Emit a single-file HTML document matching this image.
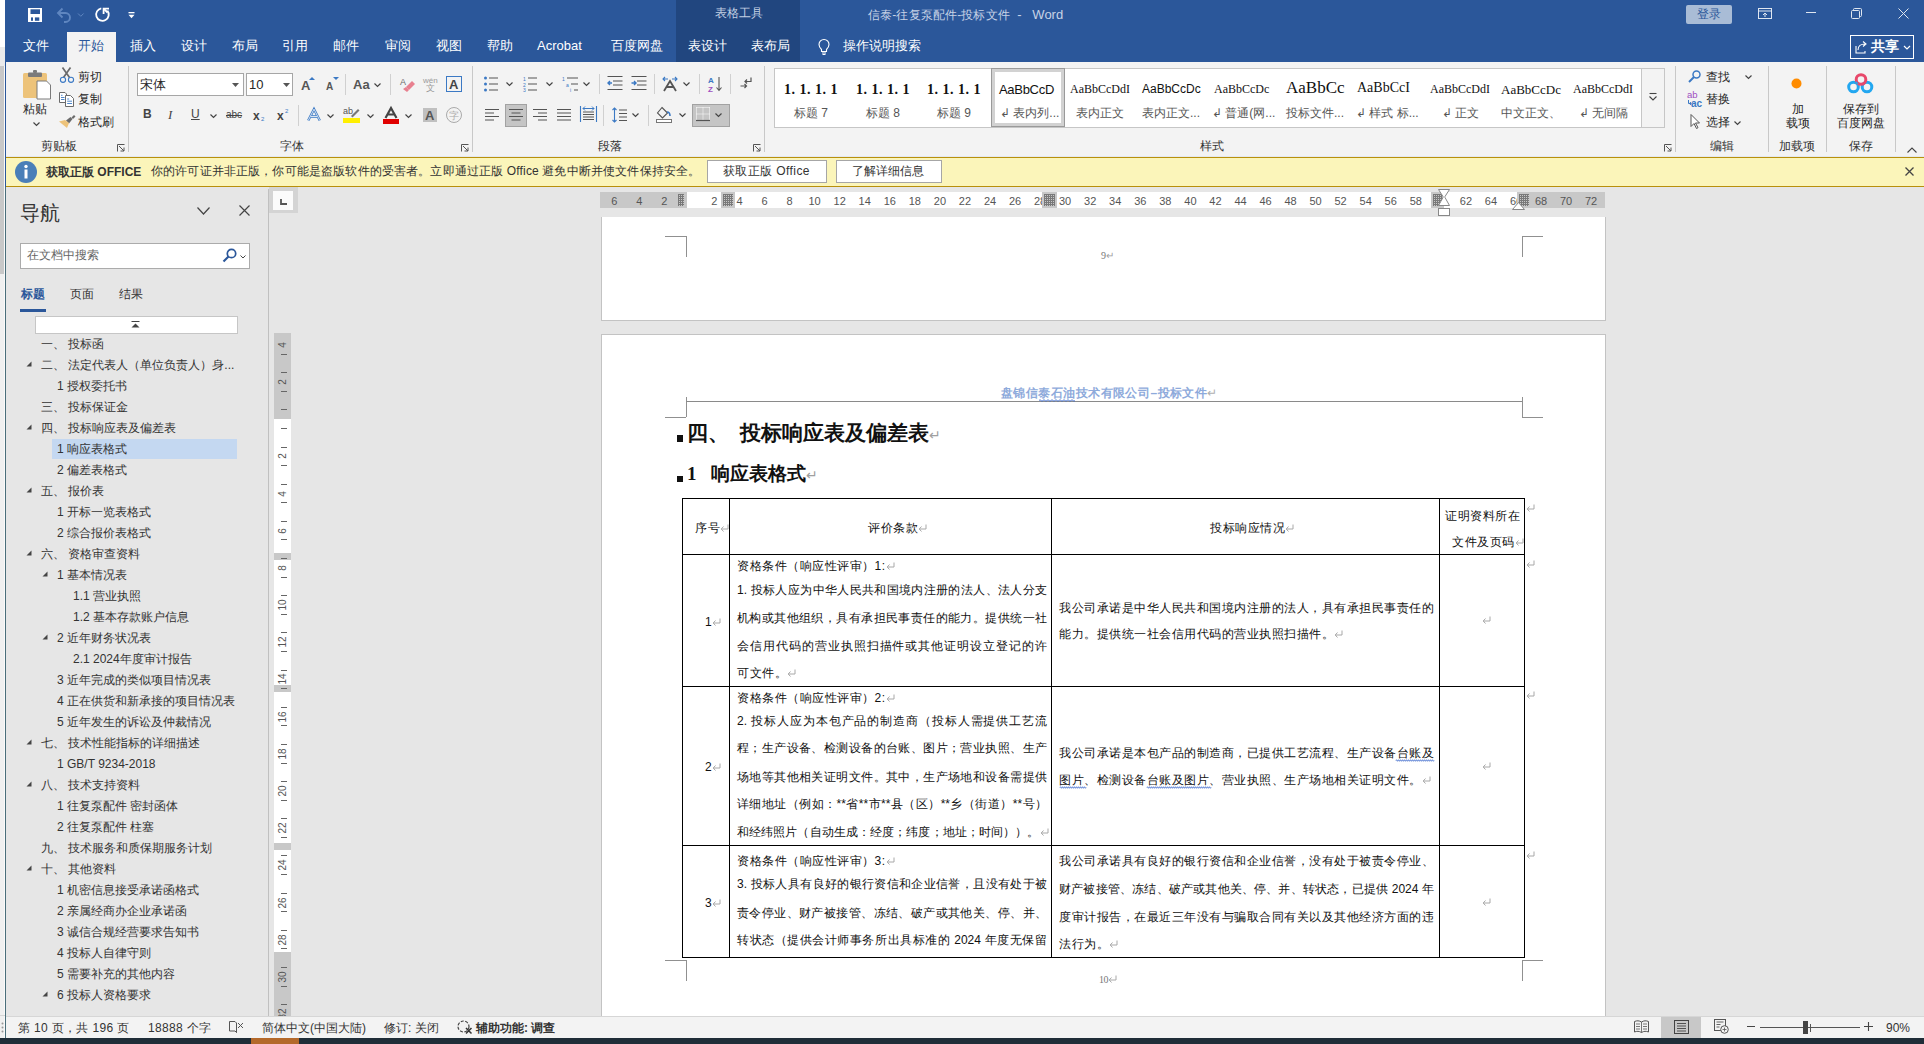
<!DOCTYPE html>
<html><head><meta charset="utf-8">
<style>
*{box-sizing:border-box}
html,body{margin:0;padding:0;width:1924px;height:1044px;overflow:hidden;background:#e6e6e6;font-family:"Liberation Sans",sans-serif;}
.a{position:absolute;white-space:nowrap;line-height:1}
.bl{background:#2b579a}
.tw{color:#fff;font-size:13px}
.rb{color:#262626;font-size:12px}
.gl{color:#444;font-size:12px}
.sep{position:absolute;width:1px;background:#d4d4d4}
svg{position:absolute;overflow:visible}
svg.pm{position:relative;display:inline-block;vertical-align:baseline;margin-left:0px}
.tx{font-size:12px;color:#111;letter-spacing:0.5px}
.j{letter-spacing:0}
.j{text-align:justify;text-align-last:justify}
</style></head><body>
<!-- outer left strip -->
<div class="a" style="left:0;top:0;width:5px;height:47px;background:#fff"></div>
<div class="a" style="left:0;top:47px;width:5px;height:19px;background:#ebebeb"></div>
<div class="a" style="left:0;top:66px;width:4px;height:208px;background:#c8c8c8"></div>
<div class="a" style="left:0;top:274px;width:4px;height:764px;background:#f0f0f0"></div>
<div class="a" style="left:4px;top:66px;width:1px;height:972px;background:#fafafa"></div>
<div class="a" style="left:0;top:1015px;width:5px;height:1px;background:#d6d6d6"></div>
<div class="a" style="left:5px;top:0;width:1px;height:187px;background:#2b579a"></div>
<div class="a" style="left:5px;top:187px;width:1px;height:851px;background:#4a6e7a"></div>

<!-- title bar + tabs -->
<div class="a bl" style="left:6px;top:0;width:1918px;height:62px"></div>
<div class="a" style="left:676px;top:0;width:124px;height:62px;background:#21467f"></div>
<div id="title">
<!-- save icon -->
<svg style="left:28px;top:8px" width="14" height="14" viewBox="0 0 14 14"><rect x="0" y="0" width="14" height="14" fill="#fff"/><rect x="2.5" y="1.3" width="9.5" height="4.7" fill="#2b579a"/><rect x="3" y="9.4" width="2" height="3.4" fill="#2b579a"/><rect x="6.9" y="9.4" width="4.4" height="3.4" fill="#2b579a"/></svg>
<!-- undo faded -->
<svg style="left:56px;top:7px" width="28" height="15" viewBox="0 0 28 15"><path d="M3 6h6.5a4.5 4.5 0 0 1 0 9H8" fill="none" stroke="#5f86c0" stroke-width="1.9"/><path d="M6.5 1.5L2 6l4.5 4.5" fill="none" stroke="#5f86c0" stroke-width="1.9"/><path d="M22 6.5l2.8 2.8 2.8-2.8" fill="none" stroke="#5f86c0" stroke-width="1"/></svg>
<!-- repeat -->
<svg style="left:95px;top:7px" width="16" height="16" viewBox="0 0 16 16"><path d="M6.3 1.3A6.3 6.3 0 1 0 12.4 3.6" fill="none" stroke="#fff" stroke-width="1.8"/><path d="M14 1.6H8.6V7" fill="none" stroke="#fff" stroke-width="1.8"/><path d="M9 2l3.5 3.5" stroke="#fff" stroke-width="1.8"/></svg>
<svg style="left:128px;top:12px" width="7" height="7" viewBox="0 0 7 7"><rect x="0.5" y="0" width="6" height="1.3" fill="#fff"/><path d="M0.5 2.8h6L3.5 6.3z" fill="#fff"/></svg>
<div class="a" style="left:715px;top:7px;font-size:12px;color:#c3d0e3">表格工具</div>
<div class="a" style="left:868px;top:8px;font-size:12px;color:#c7d3e6"><span style="letter-spacing:0.15px">信泰-往复泵配件-投标文件</span><span style="font-size:13px"> &nbsp;-&nbsp;&nbsp; Word</span></div>
<div class="a" style="left:1686px;top:5px;width:46px;height:19px;background:#a9bcd6;border-radius:2px"></div>
<div class="a" style="left:1697px;top:8px;font-size:12px;color:#2b579a">登录</div>
<svg style="left:1758px;top:8px" width="14" height="11" viewBox="0 0 14 11"><rect x="0.5" y="0.5" width="13" height="10" fill="none" stroke="#dfe6f0" stroke-width="1"/><path d="M0.5 3h13" stroke="#dfe6f0"/><path d="M7 9V5M5 7l2-2 2 2" fill="none" stroke="#dfe6f0"/></svg>
<div class="a" style="left:1806px;top:12px;width:10px;height:1px;background:#dfe6f0"></div>
<svg style="left:1851px;top:8px" width="11" height="11" viewBox="0 0 11 11"><rect x="0.5" y="2.5" width="8" height="8" rx="1" fill="none" stroke="#dfe6f0"/><path d="M2.5 2.5V1.5a1 1 0 0 1 1-1h6a1 1 0 0 1 1 1v6a1 1 0 0 1-1 1h-1" fill="none" stroke="#dfe6f0"/></svg>
<svg style="left:1898px;top:8px" width="11" height="11" viewBox="0 0 11 11"><path d="M0.5 0.5l10 10M10.5 0.5l-10 10" stroke="#dfe6f0" stroke-width="1"/></svg>
<div class="a" style="left:1850px;top:35px;width:64px;height:24px;border:1px solid #fff"></div>
<svg style="left:1855px;top:40px" width="13" height="14" viewBox="0 0 13 14"><path d="M1 6v7h9v-2" fill="none" stroke="#fff" stroke-width="1.1"/><path d="M3 10c0-4 3-6 7-6M8 1.5l3 2.5-3 2.5" fill="none" stroke="#fff" stroke-width="1.1"/></svg>
<div class="a" style="left:1871px;top:39px;font-size:14px;font-weight:bold;color:#fff">共享</div>
<svg style="left:1903px;top:45px" width="8" height="5" viewBox="0 0 8 5"><path d="M1 1l3 3 3-3" fill="none" stroke="#fff" stroke-width="1.2"/></svg>
</div>
<div id="tabs">
<div class="a" style="left:67px;top:32px;width:49px;height:31px;background:#f3f3f3"></div>
<div class="a tw" style="left:23px;top:39px">文件</div>
<div class="a" style="left:78px;top:39px;font-size:13px;color:#2b579a">开始</div>
<div class="a tw" style="left:130px;top:39px">插入</div>
<div class="a tw" style="left:181px;top:39px">设计</div>
<div class="a tw" style="left:232px;top:39px">布局</div>
<div class="a tw" style="left:282px;top:39px">引用</div>
<div class="a tw" style="left:333px;top:39px">邮件</div>
<div class="a tw" style="left:385px;top:39px">审阅</div>
<div class="a tw" style="left:436px;top:39px">视图</div>
<div class="a tw" style="left:487px;top:39px">帮助</div>
<div class="a tw" style="left:537px;top:39px">Acrobat</div>
<div class="a tw" style="left:611px;top:39px">百度网盘</div>
<div class="a tw" style="left:688px;top:39px">表设计</div>
<div class="a tw" style="left:751px;top:39px">表布局</div>
<svg style="left:818px;top:38px" width="12" height="17" viewBox="0 0 12 17"><path d="M3.5 11.5C2 10 1 8.5 1 6.5a5 5 0 0 1 10 0c0 2-1 3.5-2.5 5v2h-5z" fill="none" stroke="#fff" stroke-width="1.1"/><path d="M4 15h4M4.5 16.5h3" stroke="#fff" stroke-width="1"/></svg>
<div class="a tw" style="left:843px;top:39px">操作说明搜索</div>
</div>

<!-- ribbon -->
<div class="a" style="left:6px;top:62px;width:1918px;height:95px;background:#f3f3f3"></div>
<div id="ribbon">
<div class="a" style="left:41px;top:140px;font-size:12px;color:#333;">剪贴板</div>
<svg style="left:117px;top:144px" width="8" height="8" viewBox="0 0 8 8"><path d="M0.5 7.5V0.5h7" fill="none" stroke="#555" stroke-width="1"/><path d="M2 2l5 5M7 3.5V7H3.5" fill="none" stroke="#555" stroke-width="1"/></svg>
<div class="a" style="left:128px;top:66px;width:1px;height:86px;background:#c8c8c8"></div>
<div class="a" style="left:280px;top:140px;font-size:12px;color:#333;">字体</div>
<svg style="left:461px;top:144px" width="8" height="8" viewBox="0 0 8 8"><path d="M0.5 7.5V0.5h7" fill="none" stroke="#555" stroke-width="1"/><path d="M2 2l5 5M7 3.5V7H3.5" fill="none" stroke="#555" stroke-width="1"/></svg>
<div class="a" style="left:472px;top:66px;width:1px;height:86px;background:#c8c8c8"></div>
<div class="a" style="left:598px;top:140px;font-size:12px;color:#333;">段落</div>
<svg style="left:753px;top:144px" width="8" height="8" viewBox="0 0 8 8"><path d="M0.5 7.5V0.5h7" fill="none" stroke="#555" stroke-width="1"/><path d="M2 2l5 5M7 3.5V7H3.5" fill="none" stroke="#555" stroke-width="1"/></svg>
<div class="a" style="left:764px;top:66px;width:1px;height:86px;background:#c8c8c8"></div>
<div class="a" style="left:1200px;top:140px;font-size:12px;color:#333;">样式</div>
<svg style="left:1664px;top:144px" width="8" height="8" viewBox="0 0 8 8"><path d="M0.5 7.5V0.5h7" fill="none" stroke="#555" stroke-width="1"/><path d="M2 2l5 5M7 3.5V7H3.5" fill="none" stroke="#555" stroke-width="1"/></svg>
<div class="a" style="left:1675px;top:66px;width:1px;height:86px;background:#c8c8c8"></div>
<div class="a" style="left:1710px;top:140px;font-size:12px;color:#333;">编辑</div>
<div class="a" style="left:1768px;top:66px;width:1px;height:86px;background:#c8c8c8"></div>
<div class="a" style="left:1779px;top:140px;font-size:12px;color:#333;">加载项</div>
<div class="a" style="left:1826px;top:66px;width:1px;height:86px;background:#c8c8c8"></div>
<div class="a" style="left:1849px;top:140px;font-size:12px;color:#333;">保存</div>
<div class="a" style="left:1895px;top:66px;width:1px;height:86px;background:#c8c8c8"></div>
<svg style="left:1907px;top:147px" width="10" height="6" viewBox="0 0 10 6"><path d="M0.5 5.5l4.5-4.5 4.5 4.5" fill="none" stroke="#444" stroke-width="1.1"/></svg>
<svg style="left:23px;top:70px" width="29" height="30" viewBox="0 0 29 30"><rect x="0" y="3" width="24" height="25" rx="1.5" fill="#edc37a"/><rect x="5" y="2.5" width="14" height="4.5" rx="1" fill="#7b7b7b"/><rect x="10" y="0" width="4" height="3" rx="1" fill="#7b7b7b"/><path d="M14 11h9.5l4 4v14H14z" fill="#fff" stroke="#7b7b7b" stroke-width="1"/></svg>
<div class="a" style="left:23px;top:103px;font-size:12px;color:#262626;">粘贴</div>
<svg style="left:33px;top:122px" width="7" height="4" viewBox="0 0 7 4"><path d="M0.5 0.5l3 3 3-3" fill="none" stroke="#444" stroke-width="1.2"/></svg>
<svg style="left:59px;top:67px" width="16" height="16" viewBox="0 0 16 16"><path d="M3.5 0.5L10.5 10.5M11.5 0.5L4.5 10.5" stroke="#6b6b6b" stroke-width="1.7"/><circle cx="4" cy="12.8" r="2.6" fill="none" stroke="#3b79c4" stroke-width="1.1"/><circle cx="12" cy="12.8" r="2.6" fill="none" stroke="#3b79c4" stroke-width="1.1"/></svg>
<div class="a" style="left:78px;top:71px;font-size:12px;color:#262626;">剪切</div>
<svg style="left:59px;top:92px" width="16" height="15" viewBox="0 0 16 15"><path d="M0.5 0.5h5.5l1.5 1.5v8.5H0.5z" fill="#fff" stroke="#6b6b6b"/><path d="M6.5 3.5h5l3 3v8h-8z" fill="#fff" stroke="#6b6b6b"/><path d="M2 3.3h1.5M2 5.5h3.5M2 7.5h3.5M8.2 7h2M8.2 9.2h4.8M8.2 11.5h4.8" stroke="#3b79c4" stroke-width="0.9"/></svg>
<div class="a" style="left:78px;top:93px;font-size:12px;color:#262626;">复制</div>
<svg style="left:59px;top:114px" width="17" height="15" viewBox="0 0 17 15"><path d="M12.5 3.5l2.5-2.5 1.5 1.5-2.5 2.5z" fill="#6b6b6b"/><path d="M7 6.5l4.5-3.5 2 2-3.5 4.5z" fill="#6b6b6b"/><path d="M0 7.5l6-1.5 4 3-2 5z" fill="#edc37a"/></svg>
<div class="a" style="left:78px;top:116px;font-size:12px;color:#262626;">格式刷</div>
<div class="a" style="left:137px;top:73px;width:107px;height:23px;background:#fff;border:1px solid #a6a6a6"></div>
<div class="a" style="left:140px;top:78px;font-size:13px;color:#262626;">宋体</div>
<svg style="left:232px;top:83px" width="7" height="4" viewBox="0 0 7 4"><path d="M0 0h7L3.5 4z" fill="#555"/></svg>
<div class="a" style="left:246px;top:73px;width:47px;height:23px;background:#fff;border:1px solid #a6a6a6"></div>
<div class="a" style="left:249px;top:78px;font-size:13px;color:#262626;">10</div>
<svg style="left:283px;top:83px" width="7" height="4" viewBox="0 0 7 4"><path d="M0 0h7L3.5 4z" fill="#555"/></svg>
<div class="a" style="left:301px;top:79px;font-size:13px;color:#555;font-weight:bold">A</div>
<svg style="left:309px;top:77px" width="6" height="3" viewBox="0 0 6 3"><path d="M0 3L3 0l3 3z" fill="#3b79c4"/></svg>
<div class="a" style="left:326px;top:82px;font-size:10px;color:#555;font-weight:bold">A</div>
<svg style="left:333px;top:77px" width="6" height="3" viewBox="0 0 6 3"><path d="M0 0h6L3 3z" fill="#3b79c4"/></svg>
<div class="a" style="left:345px;top:74px;width:1px;height:21px;background:#d0d0d0"></div>
<div class="a" style="left:353px;top:78px;font-size:13px;color:#555;font-weight:bold">Aa</div>
<svg style="left:374px;top:83px" width="7" height="4" viewBox="0 0 7 4"><path d="M0.5 0.5l3 3 3-3" fill="none" stroke="#444" stroke-width="1.2"/></svg>
<div class="a" style="left:390px;top:74px;width:1px;height:21px;background:#d0d0d0"></div>
<svg style="left:400px;top:76px" width="15" height="16" viewBox="0 0 15 16"><text x="0" y="9" font-size="9" fill="#6b6b6b" font-family="Liberation Sans">A</text><path d="M6 11l6-6 3 3-6 6z" fill="#e8808f"/><path d="M3 13l3-2 3 3-2 2z" fill="#e8808f"/></svg>
<div class="a" style="left:423px;top:77px;font-size:8px;color:#9a9a9a;">wén</div>
<div class="a" style="left:426px;top:84px;font-size:9px;color:#9a9a9a;">文</div>
<div class="a" style="left:446px;top:76px;width:16px;height:16px;border:1.3px solid #3b79c4"></div>
<div class="a" style="left:449px;top:78px;font-size:13px;color:#444;font-weight:bold">A</div>
<div class="a" style="left:143px;top:108px;font-size:12px;color:#444;font-weight:bold">B</div>
<div class="a" style="left:168px;top:108px;font-size:12px;color:#444;font-style:italic;font-family:Liberation Serif;font-size:13px">I</div>
<div class="a" style="left:191px;top:108px;font-size:12px;color:#444;text-decoration:underline">U</div>
<svg style="left:210px;top:114px" width="7" height="4" viewBox="0 0 7 4"><path d="M0.5 0.5l3 3 3-3" fill="none" stroke="#444" stroke-width="1.2"/></svg>
<div class="a" style="left:226px;top:110px;font-size:10px;color:#444;text-decoration:line-through">abc</div>
<div class="a" style="left:253px;top:110px;font-size:12px;color:#444;font-weight:bold">x</div>
<div class="a" style="left:261px;top:116px;font-size:6px;color:#3b79c4;">2</div>
<div class="a" style="left:277px;top:110px;font-size:12px;color:#444;font-weight:bold">x</div>
<div class="a" style="left:285px;top:108px;font-size:6px;color:#3b79c4;">2</div>
<div class="a" style="left:298px;top:105px;width:1px;height:21px;background:#d0d0d0"></div>
<svg style="left:307px;top:108px" width="14" height="13" viewBox="0 0 14 13"><path d="M1.2 12.5L7 1.2 12.8 12.5M3.8 8.5h6.4" fill="none" stroke="#3b79c4" stroke-width="2.4"/><path d="M1.2 12.5L7 1.2 12.8 12.5M3.8 8.5h6.4" fill="none" stroke="#fff" stroke-width="0.8"/></svg>
<svg style="left:327px;top:114px" width="7" height="4" viewBox="0 0 7 4"><path d="M0.5 0.5l3 3 3-3" fill="none" stroke="#444" stroke-width="1.2"/></svg>
<svg style="left:343px;top:106px" width="17" height="18" viewBox="0 0 17 18"><text x="0" y="8" font-size="9" fill="#555" font-family="Liberation Sans">ab</text><path d="M8 10l7-7 1.5 1.5-7 7z" fill="#777"/><rect x="0" y="12" width="17" height="5" fill="#ffef00"/></svg>
<svg style="left:367px;top:114px" width="7" height="4" viewBox="0 0 7 4"><path d="M0.5 0.5l3 3 3-3" fill="none" stroke="#444" stroke-width="1.2"/></svg>
<svg style="left:383px;top:107px" width="17" height="17" viewBox="0 0 17 17"><path d="M2.5 11L8 1 13.5 11M4.8 7.5h6.4" fill="none" stroke="#444" stroke-width="2.2"/><rect x="0" y="12" width="16" height="5" fill="#e00000"/></svg>
<svg style="left:405px;top:114px" width="7" height="4" viewBox="0 0 7 4"><path d="M0.5 0.5l3 3 3-3" fill="none" stroke="#444" stroke-width="1.2"/></svg>
<div class="a" style="left:423px;top:108px;width:14px;height:14px;background:#c0c0c0"></div>
<div class="a" style="left:425px;top:109px;font-size:13px;color:#555;font-weight:bold">A</div>
<svg style="left:446px;top:107px" width="16" height="16" viewBox="0 0 16 16"><circle cx="8" cy="8" r="7.5" fill="none" stroke="#aaa" stroke-width="1"/><text x="3" y="12" font-size="10" fill="#aaa">字</text></svg>
<svg style="left:484px;top:76px" width="15" height="16" viewBox="0 0 15 16"><circle cx="1.5" cy="2" r="1.5" fill="#3b79c4"/><circle cx="1.5" cy="8" r="1.5" fill="#3b79c4"/><circle cx="1.5" cy="14" r="1.5" fill="#3b79c4"/><path d="M5 2h9M5 8h9M5 14h9" stroke="#555" stroke-width="1.1"/></svg>
<svg style="left:506px;top:82px" width="7" height="4" viewBox="0 0 7 4"><path d="M0.5 0.5l3 3 3-3" fill="none" stroke="#444" stroke-width="1.2"/></svg>
<svg style="left:523px;top:76px" width="15" height="16" viewBox="0 0 15 16"><text x="0" y="5" font-size="5" fill="#3b79c4">1</text><text x="0" y="11" font-size="5" fill="#3b79c4">2</text><text x="0" y="16" font-size="5" fill="#3b79c4">3</text><path d="M5 2h9M5 8h9M5 14h9" stroke="#555" stroke-width="1.1"/></svg>
<svg style="left:546px;top:82px" width="7" height="4" viewBox="0 0 7 4"><path d="M0.5 0.5l3 3 3-3" fill="none" stroke="#444" stroke-width="1.2"/></svg>
<svg style="left:562px;top:76px" width="17" height="16" viewBox="0 0 17 16"><text x="0" y="5" font-size="5" fill="#3b79c4">1</text><text x="4" y="11" font-size="5" fill="#3b79c4">a</text><text x="8" y="16" font-size="5" fill="#3b79c4">i</text><path d="M5 2h11M9 8h7M12 14h4" stroke="#555" stroke-width="1.1"/></svg>
<svg style="left:583px;top:82px" width="7" height="4" viewBox="0 0 7 4"><path d="M0.5 0.5l3 3 3-3" fill="none" stroke="#444" stroke-width="1.2"/></svg>
<div class="a" style="left:599px;top:74px;width:1px;height:20px;background:#d0d0d0"></div>
<svg style="left:607px;top:76px" width="16" height="14" viewBox="0 0 16 14"><path d="M0.5 0.5h15M6 5h9.5M6 9h9.5M0.5 13.5h15" stroke="#555" stroke-width="1.1"/><path d="M5 7H1M3 5L1 7l2 2" fill="none" stroke="#3b79c4" stroke-width="1.4"/></svg>
<svg style="left:631px;top:76px" width="16" height="14" viewBox="0 0 16 14"><path d="M0.5 0.5h15M6 5h9.5M6 9h9.5M0.5 13.5h15" stroke="#555" stroke-width="1.1"/><path d="M0.5 7h4.5M3 5l2 2-2 2" fill="none" stroke="#3b79c4" stroke-width="1.4"/></svg>
<div class="a" style="left:654px;top:74px;width:1px;height:20px;background:#d0d0d0"></div>
<svg style="left:662px;top:76px" width="16" height="16" viewBox="0 0 16 16"><path d="M2 15L8 5l6 10M4.5 11h7" fill="none" stroke="#555" stroke-width="1.8"/><path d="M1 3h5M3 1L1 3l2 2M15 3h-5M13 1l2 2-2 2" fill="none" stroke="#3b79c4" stroke-width="1.1"/></svg>
<svg style="left:683px;top:82px" width="7" height="4" viewBox="0 0 7 4"><path d="M0.5 0.5l3 3 3-3" fill="none" stroke="#444" stroke-width="1.2"/></svg>
<div class="a" style="left:699px;top:74px;width:1px;height:20px;background:#d0d0d0"></div>
<svg style="left:708px;top:76px" width="14" height="16" viewBox="0 0 14 16"><text x="0" y="7" font-size="8" fill="#3b79c4" font-weight="bold">A</text><text x="0" y="15.5" font-size="8" fill="#9e4fc1" font-weight="bold">Z</text><path d="M11 1v13M8.5 11.5L11 14.5l2.5-3" fill="none" stroke="#555" stroke-width="1.1"/></svg>
<div class="a" style="left:730px;top:74px;width:1px;height:20px;background:#d0d0d0"></div>
<svg style="left:740px;top:77px" width="12" height="13" viewBox="0 0 12 13"><path d="M11 0.5v4H5M7 2.5L5 4.5l2 2" fill="none" stroke="#555" stroke-width="1.2"/><path d="M0.5 9h6M4.5 7l2 2-2 2" fill="none" stroke="#555" stroke-width="1.2"/></svg>
<svg style="left:485px;top:109px" width="14" height="12" viewBox="0 0 14 12"><path d="M0 0.5h14M0 4h9M0 7.5h14M0 11h9" stroke="#555" stroke-width="1.1"/></svg>
<div class="a" style="left:505px;top:104px;width:22px;height:23px;background:#c5c5c5;border:1px solid #a2a2a2"></div>
<svg style="left:509px;top:109px" width="14" height="12" viewBox="0 0 14 12"><path d="M0 0.5h14M2.5 4h9M0 7.5h14M2.5 11h9" stroke="#555" stroke-width="1.1"/></svg>
<svg style="left:533px;top:109px" width="14" height="12" viewBox="0 0 14 12"><path d="M0 0.5h14M5 4h9M0 7.5h14M5 11h9" stroke="#555" stroke-width="1.1"/></svg>
<svg style="left:557px;top:109px" width="14" height="12" viewBox="0 0 14 12"><path d="M0 0.5h14M0 4h14M0 7.5h14M0 11h14" stroke="#555" stroke-width="1.1"/></svg>
<svg style="left:580px;top:106px" width="17" height="16" viewBox="0 0 17 16"><path d="M0.5 0v16M16.5 0v16" stroke="#3b79c4" stroke-width="1.1"/><path d="M3 2.5h11M5 0.5L3 2.5l2 2M12 0.5l2 2-2 2" fill="none" stroke="#3b79c4" stroke-width="1"/><path d="M3 6h11M3 8.5h11M3 11h11M3 13.5h11" stroke="#555" stroke-width="1"/></svg>
<div class="a" style="left:603px;top:105px;width:1px;height:21px;background:#d0d0d0"></div>
<svg style="left:612px;top:107px" width="15" height="16" viewBox="0 0 15 16"><path d="M2.5 1v14M0.5 3l2-2 2 2M0.5 13l2 2 2-2" fill="none" stroke="#3b79c4" stroke-width="1.1"/><path d="M7 3h8M7 6.5h8M7 10h8M7 13.5h8" stroke="#555" stroke-width="1.1"/></svg>
<svg style="left:632px;top:113px" width="7" height="4" viewBox="0 0 7 4"><path d="M0.5 0.5l3 3 3-3" fill="none" stroke="#444" stroke-width="1.2"/></svg>
<div class="a" style="left:648px;top:105px;width:1px;height:21px;background:#d0d0d0"></div>
<svg style="left:656px;top:107px" width="17" height="16" viewBox="0 0 17 16"><path d="M6 0.5l5.5 5.5-5 5-5-5z" fill="none" stroke="#555" stroke-width="1.1"/><path d="M11 5c2 0 3 2 3 4" fill="none" stroke="#3b79c4" stroke-width="1.6"/><rect x="0.5" y="12.5" width="15" height="3" fill="#fff" stroke="#777"/></svg>
<svg style="left:679px;top:113px" width="7" height="4" viewBox="0 0 7 4"><path d="M0.5 0.5l3 3 3-3" fill="none" stroke="#444" stroke-width="1.2"/></svg>
<div class="a" style="left:692px;top:104px;width:38px;height:23px;background:#c5c5c5;border:1px solid #a2a2a2"></div>
<svg style="left:696px;top:107px" width="14" height="14" viewBox="0 0 14 14"><path d="M0.5 0.5h13M0.5 7h13M0.5 0.5v13M7 0.5v13M13.5 0.5v13" stroke="#fff" stroke-width="1" stroke-dasharray="1 1"/><path d="M0 13.5h14" stroke="#555" stroke-width="1.2"/></svg>
<svg style="left:715px;top:113px" width="7" height="4" viewBox="0 0 7 4"><path d="M0.5 0.5l3 3 3-3" fill="none" stroke="#444" stroke-width="1.2"/></svg>
<div class="a" style="left:774px;top:68px;width:891px;height:60px;background:#fff;border:1px solid #c6c6c6"></div>
<div class="a" style="left:1641px;top:68px;width:24px;height:60px;background:#f3f3f3;border:1px solid #c6c6c6"></div>
<svg style="left:1649px;top:93px" width="8" height="8" viewBox="0 0 8 8"><path d="M0.5 0.5h7" stroke="#444" stroke-width="1.1"/><path d="M0.5 3.5l3.5 3.5 3.5-3.5" fill="none" stroke="#444" stroke-width="1.1"/></svg>
<div class="a" style="left:992px;top:69px;width:72px;height:57px;border:3px solid #d2d2d2;outline:1px solid #9a9a9a"></div>
<div class="a" style="left:784px;top:83px;font-size:14px;color:#111;font-family:Liberation Serif;font-weight:bold;letter-spacing:0.5px">1. 1. 1. 1</div>
<div class="a" style="left:794px;top:107px;font-size:12px;color:#555;">标题 7</div>
<div class="a" style="left:856px;top:83px;font-size:14px;color:#111;font-family:Liberation Serif;font-weight:bold;letter-spacing:0.5px">1. 1. 1. 1</div>
<div class="a" style="left:866px;top:107px;font-size:12px;color:#555;">标题 8</div>
<div class="a" style="left:927px;top:83px;font-size:14px;color:#111;font-family:Liberation Serif;font-weight:bold;letter-spacing:0.5px">1. 1. 1. 1</div>
<div class="a" style="left:937px;top:107px;font-size:12px;color:#555;">标题 9</div>
<div class="a" style="left:999px;top:83px;font-size:13px;color:#111;letter-spacing:-0.3px">AaBbCcD</div>
<div class="a" style="left:1000px;top:107px;font-size:12px;color:#555;">↲ 表内列...</div>
<div class="a" style="left:1070px;top:83px;font-size:12px;color:#111;font-family:Liberation Serif">AaBbCcDdI</div>
<div class="a" style="left:1076px;top:107px;font-size:12px;color:#555;">表内正文</div>
<div class="a" style="left:1142px;top:83px;font-size:12px;color:#111;font-family:Liberation Sans">AaBbCcDc</div>
<div class="a" style="left:1142px;top:107px;font-size:12px;color:#555;">表内正文...</div>
<div class="a" style="left:1214px;top:83px;font-size:12px;color:#111;font-family:Liberation Serif">AaBbCcDc</div>
<div class="a" style="left:1212px;top:107px;font-size:12px;color:#555;">↲ 普通(网...</div>
<div class="a" style="left:1286px;top:79px;font-size:17px;color:#111;font-family:Liberation Serif">AaBbCc</div>
<div class="a" style="left:1286px;top:107px;font-size:12px;color:#555;">投标文件...</div>
<div class="a" style="left:1357px;top:81px;font-size:14px;color:#111;font-family:Liberation Serif">AaBbCcI</div>
<div class="a" style="left:1356px;top:107px;font-size:12px;color:#555;">↲ 样式 标...</div>
<div class="a" style="left:1430px;top:83px;font-size:12px;color:#111;font-family:Liberation Serif">AaBbCcDdI</div>
<div class="a" style="left:1442px;top:107px;font-size:12px;color:#555;">↲ 正文</div>
<div class="a" style="left:1501px;top:83px;font-size:13px;color:#111;font-family:Liberation Serif">AaBbCcDc</div>
<div class="a" style="left:1501px;top:107px;font-size:12px;color:#555;">中文正文、</div>
<div class="a" style="left:1573px;top:83px;font-size:12px;color:#111;font-family:Liberation Serif">AaBbCcDdI</div>
<div class="a" style="left:1579px;top:107px;font-size:12px;color:#555;">↲ 无间隔</div>
<svg style="left:1688px;top:70px" width="13" height="13" viewBox="0 0 13 13"><circle cx="8.5" cy="4.5" r="3.5" fill="none" stroke="#3b79c4" stroke-width="1.5"/><path d="M6 7l-5 5" stroke="#3b79c4" stroke-width="2"/></svg>
<div class="a" style="left:1706px;top:71px;font-size:12px;color:#262626;">查找</div>
<svg style="left:1745px;top:75px" width="7" height="4" viewBox="0 0 7 4"><path d="M0.5 0.5l3 3 3-3" fill="none" stroke="#444" stroke-width="1.2"/></svg>
<svg style="left:1687px;top:91px" width="17" height="16" viewBox="0 0 17 16"><text x="0" y="7" font-size="9.5" fill="#9e4fc1" font-family="Liberation Sans">ab</text><text x="4" y="15.5" font-size="10" fill="#3b79c4" font-family="Liberation Sans" font-weight="bold">ac</text><path d="M1.5 9v3.5h2.5M3 11l1.2 1.5L3 14" fill="none" stroke="#3b79c4" stroke-width="1"/></svg>
<div class="a" style="left:1706px;top:93px;font-size:12px;color:#262626;">替换</div>
<svg style="left:1690px;top:114px" width="10" height="15" viewBox="0 0 10 15"><path d="M1 0.5v12l3-3 2.5 5 1.5-0.8-2.5-4.7H9.5z" fill="#fff" stroke="#555" stroke-width="1"/></svg>
<div class="a" style="left:1706px;top:116px;font-size:12px;color:#262626;">选择</div>
<svg style="left:1734px;top:121px" width="7" height="4" viewBox="0 0 7 4"><path d="M0.5 0.5l3 3 3-3" fill="none" stroke="#444" stroke-width="1.2"/></svg>
<svg style="left:1791px;top:78px" width="11" height="11" viewBox="0 0 11 11"><circle cx="5.5" cy="5.5" r="5" fill="#ff8c00"/></svg>
<div class="a" style="left:1792px;top:103px;font-size:12px;color:#262626;">加</div>
<div class="a" style="left:1786px;top:117px;font-size:12px;color:#262626;">载项</div>
<svg style="left:1847px;top:72px" width="27" height="22" viewBox="0 0 27 22"><circle cx="6.5" cy="15" r="4.8" fill="none" stroke="#22a7f0" stroke-width="3"/><circle cx="20" cy="15" r="4.8" fill="none" stroke="#22a7f0" stroke-width="3"/><circle cx="14" cy="7.5" r="4.8" fill="none" stroke="#e8486a" stroke-width="3"/><path d="M9.5 11.5a4.8 4.8 0 0 1 1-1" stroke="#22a7f0" stroke-width="3"/></svg>
<div class="a" style="left:1843px;top:103px;font-size:12px;color:#262626;">保存到</div>
<div class="a" style="left:1837px;top:117px;font-size:12px;color:#262626;">百度网盘</div>
</div>

<!-- yellow bar -->
<div class="a" style="left:6px;top:156px;width:1918px;height:1px;background:#e4e8ee"></div>
<div class="a" style="left:6px;top:157px;width:1918px;height:30px;background:#fbf5ba;border-top:1px solid #b8900c;border-bottom:1px solid #b8900c"></div>
<div id="ybar">
<svg style="left:15px;top:161px" width="22" height="22" viewBox="0 0 22 22"><circle cx="11" cy="11" r="11" fill="#4a7fb8"/><circle cx="11" cy="5.5" r="1.7" fill="#fff"/><rect x="9.5" y="8.5" width="3" height="9" fill="#fff"/></svg>
<div class="a" style="left:46px;top:166px;font-size:12px;color:#333;font-weight:bold">获取正版 OFFICE</div>
<div class="a" style="left:151px;top:165px;font-size:12px;color:#333;letter-spacing:0.15px">你的许可证并非正版，你可能是盗版软件的受害者。立即通过正版 Office 避免中断并使文件保持安全。</div>
<div class="a" style="left:707px;top:160px;width:120px;height:23px;background:#fff;border:1px solid #a6a6a6"></div>
<div class="a" style="left:723px;top:165px;font-size:12px;color:#333;letter-spacing:0.4px">获取正版 Office</div>
<div class="a" style="left:836px;top:160px;width:106px;height:23px;background:#fff;border:1px solid #a6a6a6"></div>
<div class="a" style="left:852px;top:165px;font-size:12px;color:#333;">了解详细信息</div>
<svg style="left:1905px;top:167px" width="9" height="9" viewBox="0 0 9 9"><path d="M0.5 0.5l8 8M8.5 0.5l-8 8" stroke="#444" stroke-width="1.3"/></svg>
</div>

<!-- nav pane -->
<div class="a" style="left:6px;top:187px;width:262px;height:829px;background:#e6e6e6"></div>
<div class="a" style="left:268px;top:189px;width:1px;height:827px;background:#c0c0c0"></div>
<div id="nav">
<div class="a" style="left:20px;top:203px;font-size:20px;color:#333;">导航</div>
<svg style="left:197px;top:207px" width="13" height="8" viewBox="0 0 13 8"><path d="M0.5 0.5l6 6.5 6-6.5" fill="none" stroke="#444" stroke-width="1.2"/></svg>
<svg style="left:239px;top:205px" width="11" height="11" viewBox="0 0 11 11"><path d="M0.5 0.5l10 10M10.5 0.5l-10 10" stroke="#444" stroke-width="1.2"/></svg>
<div class="a" style="left:20px;top:243px;width:230px;height:26px;background:#fff;border:1px solid #ababab"></div>
<div class="a" style="left:27px;top:249px;font-size:12px;color:#666;">在文档中搜索</div>
<svg style="left:222px;top:248px" width="15" height="15" viewBox="0 0 15 15"><circle cx="9.5" cy="5.5" r="4.2" fill="none" stroke="#2b579a" stroke-width="1.7"/><path d="M6.5 8.5L1.5 13.5" stroke="#2b579a" stroke-width="2.2"/></svg>
<svg style="left:240px;top:255px" width="6" height="4" viewBox="0 0 6 4"><path d="M0.5 0.5l2.5 2.5 2.5-2.5" fill="none" stroke="#444" stroke-width="1"/></svg>
<div class="a" style="left:21px;top:288px;font-size:12px;color:#2b579a;font-weight:bold">标题</div>
<div class="a" style="left:20px;top:309px;width:26px;height:3px;background:#2b579a"></div>
<div class="a" style="left:70px;top:288px;font-size:12px;color:#333;">页面</div>
<div class="a" style="left:119px;top:288px;font-size:12px;color:#333;">结果</div>
<div class="a" style="left:35px;top:316px;width:203px;height:18px;background:#fff;border:1px solid #c6c6c6"></div>
<svg style="left:131px;top:321px" width="9" height="7" viewBox="0 0 9 7"><path d="M0.5 0.5h8" stroke="#444" stroke-width="1"/><path d="M0.5 6.5L4.5 2.5l4 4z" fill="#444"/></svg>
<div class="a" style="left:52px;top:439px;width:185px;height:20px;background:#c4d8f1"></div>
<div class="a" style="left:41px;top:338px;font-size:12px;color:#333;">一、 投标函</div>
<div class="a" style="left:41px;top:359px;font-size:12px;color:#333;">二、 法定代表人（单位负责人）身...</div>
<svg style="left:26px;top:361px" width="6" height="6" viewBox="0 0 6 6"><path d="M5.5 0.5V5.5H0.5z" fill="#444"/></svg>
<div class="a" style="left:57px;top:380px;font-size:12px;color:#333;">1 授权委托书</div>
<div class="a" style="left:41px;top:401px;font-size:12px;color:#333;">三、 投标保证金</div>
<div class="a" style="left:41px;top:422px;font-size:12px;color:#333;">四、 投标响应表及偏差表</div>
<svg style="left:26px;top:424px" width="6" height="6" viewBox="0 0 6 6"><path d="M5.5 0.5V5.5H0.5z" fill="#444"/></svg>
<div class="a" style="left:57px;top:443px;font-size:12px;color:#333;">1 响应表格式</div>
<div class="a" style="left:57px;top:464px;font-size:12px;color:#333;">2 偏差表格式</div>
<div class="a" style="left:41px;top:485px;font-size:12px;color:#333;">五、 报价表</div>
<svg style="left:26px;top:487px" width="6" height="6" viewBox="0 0 6 6"><path d="M5.5 0.5V5.5H0.5z" fill="#444"/></svg>
<div class="a" style="left:57px;top:506px;font-size:12px;color:#333;">1 开标一览表格式</div>
<div class="a" style="left:57px;top:527px;font-size:12px;color:#333;">2 综合报价表格式</div>
<div class="a" style="left:41px;top:548px;font-size:12px;color:#333;">六、 资格审查资料</div>
<svg style="left:26px;top:550px" width="6" height="6" viewBox="0 0 6 6"><path d="M5.5 0.5V5.5H0.5z" fill="#444"/></svg>
<div class="a" style="left:57px;top:569px;font-size:12px;color:#333;">1 基本情况表</div>
<svg style="left:42px;top:571px" width="6" height="6" viewBox="0 0 6 6"><path d="M5.5 0.5V5.5H0.5z" fill="#444"/></svg>
<div class="a" style="left:73px;top:590px;font-size:12px;color:#333;">1.1 营业执照</div>
<div class="a" style="left:73px;top:611px;font-size:12px;color:#333;">1.2 基本存款账户信息</div>
<div class="a" style="left:57px;top:632px;font-size:12px;color:#333;">2 近年财务状况表</div>
<svg style="left:42px;top:634px" width="6" height="6" viewBox="0 0 6 6"><path d="M5.5 0.5V5.5H0.5z" fill="#444"/></svg>
<div class="a" style="left:73px;top:653px;font-size:12px;color:#333;">2.1 2024年度审计报告</div>
<div class="a" style="left:57px;top:674px;font-size:12px;color:#333;">3 近年完成的类似项目情况表</div>
<div class="a" style="left:57px;top:695px;font-size:12px;color:#333;">4 正在供货和新承接的项目情况表</div>
<div class="a" style="left:57px;top:716px;font-size:12px;color:#333;">5 近年发生的诉讼及仲裁情况</div>
<div class="a" style="left:41px;top:737px;font-size:12px;color:#333;">七、 技术性能指标的详细描述</div>
<svg style="left:26px;top:739px" width="6" height="6" viewBox="0 0 6 6"><path d="M5.5 0.5V5.5H0.5z" fill="#444"/></svg>
<div class="a" style="left:57px;top:758px;font-size:12px;color:#333;">1 GB/T 9234-2018</div>
<div class="a" style="left:41px;top:779px;font-size:12px;color:#333;">八、 技术支持资料</div>
<svg style="left:26px;top:781px" width="6" height="6" viewBox="0 0 6 6"><path d="M5.5 0.5V5.5H0.5z" fill="#444"/></svg>
<div class="a" style="left:57px;top:800px;font-size:12px;color:#333;">1 往复泵配件 密封函体</div>
<div class="a" style="left:57px;top:821px;font-size:12px;color:#333;">2 往复泵配件 柱塞</div>
<div class="a" style="left:41px;top:842px;font-size:12px;color:#333;">九、 技术服务和质保期服务计划</div>
<div class="a" style="left:41px;top:863px;font-size:12px;color:#333;">十、 其他资料</div>
<svg style="left:26px;top:865px" width="6" height="6" viewBox="0 0 6 6"><path d="M5.5 0.5V5.5H0.5z" fill="#444"/></svg>
<div class="a" style="left:57px;top:884px;font-size:12px;color:#333;">1 机密信息接受承诺函格式</div>
<div class="a" style="left:57px;top:905px;font-size:12px;color:#333;">2 亲属经商办企业承诺函</div>
<div class="a" style="left:57px;top:926px;font-size:12px;color:#333;">3 诚信合规经营要求告知书</div>
<div class="a" style="left:57px;top:947px;font-size:12px;color:#333;">4 投标人自律守则</div>
<div class="a" style="left:57px;top:968px;font-size:12px;color:#333;">5 需要补充的其他内容</div>
<div class="a" style="left:57px;top:989px;font-size:12px;color:#333;">6 投标人资格要求</div>
<svg style="left:42px;top:991px" width="6" height="6" viewBox="0 0 6 6"><path d="M5.5 0.5V5.5H0.5z" fill="#444"/></svg>
</div>

<!-- doc area -->
<div id="doc">
<div class="a" style="left:269px;top:187px;width:29px;height:26px;background:#d4d4d4;"></div>
<div class="a" style="left:273px;top:191px;width:20px;height:19px;background:#fbfbfb;"></div>
<svg style="left:280px;top:199px" width="7" height="6" viewBox="0 0 7 6"><path d="M1 0v5h6" fill="none" stroke="#555" stroke-width="1.8"/></svg>
<div class="a" style="left:600px;top:192px;width:87px;height:16px;background:#c8c8c8;"></div>
<div class="a" style="left:687px;top:192px;width:830px;height:16px;background:#fff;"></div>
<div class="a" style="left:1517px;top:192px;width:88px;height:16px;background:#c8c8c8;"></div>
<div class="a" style="left:711.3px;top:196px;width:6px;text-align:center;font-size:11px;color:#555">2</div>
<div class="a" style="left:736.4px;top:196px;width:6px;text-align:center;font-size:11px;color:#555">4</div>
<div class="a" style="left:761.4px;top:196px;width:6px;text-align:center;font-size:11px;color:#555">6</div>
<div class="a" style="left:786.5px;top:196px;width:6px;text-align:center;font-size:11px;color:#555">8</div>
<div class="a" style="left:808.5px;top:196px;width:12px;text-align:center;font-size:11px;color:#555">10</div>
<div class="a" style="left:833.6px;top:196px;width:12px;text-align:center;font-size:11px;color:#555">12</div>
<div class="a" style="left:858.6px;top:196px;width:12px;text-align:center;font-size:11px;color:#555">14</div>
<div class="a" style="left:883.7px;top:196px;width:12px;text-align:center;font-size:11px;color:#555">16</div>
<div class="a" style="left:908.7px;top:196px;width:12px;text-align:center;font-size:11px;color:#555">18</div>
<div class="a" style="left:933.8px;top:196px;width:12px;text-align:center;font-size:11px;color:#555">20</div>
<div class="a" style="left:958.8px;top:196px;width:12px;text-align:center;font-size:11px;color:#555">22</div>
<div class="a" style="left:983.9px;top:196px;width:12px;text-align:center;font-size:11px;color:#555">24</div>
<div class="a" style="left:1008.9px;top:196px;width:12px;text-align:center;font-size:11px;color:#555">26</div>
<div class="a" style="left:1034.0px;top:196px;width:12px;text-align:center;font-size:11px;color:#555">28</div>
<div class="a" style="left:1059.0px;top:196px;width:12px;text-align:center;font-size:11px;color:#555">30</div>
<div class="a" style="left:1084.1px;top:196px;width:12px;text-align:center;font-size:11px;color:#555">32</div>
<div class="a" style="left:1109.1px;top:196px;width:12px;text-align:center;font-size:11px;color:#555">34</div>
<div class="a" style="left:1134.2px;top:196px;width:12px;text-align:center;font-size:11px;color:#555">36</div>
<div class="a" style="left:1159.2px;top:196px;width:12px;text-align:center;font-size:11px;color:#555">38</div>
<div class="a" style="left:1184.3px;top:196px;width:12px;text-align:center;font-size:11px;color:#555">40</div>
<div class="a" style="left:1209.3px;top:196px;width:12px;text-align:center;font-size:11px;color:#555">42</div>
<div class="a" style="left:1234.4px;top:196px;width:12px;text-align:center;font-size:11px;color:#555">44</div>
<div class="a" style="left:1259.4px;top:196px;width:12px;text-align:center;font-size:11px;color:#555">46</div>
<div class="a" style="left:1284.5px;top:196px;width:12px;text-align:center;font-size:11px;color:#555">48</div>
<div class="a" style="left:1309.5px;top:196px;width:12px;text-align:center;font-size:11px;color:#555">50</div>
<div class="a" style="left:1334.5px;top:196px;width:12px;text-align:center;font-size:11px;color:#555">52</div>
<div class="a" style="left:1359.6px;top:196px;width:12px;text-align:center;font-size:11px;color:#555">54</div>
<div class="a" style="left:1384.6px;top:196px;width:12px;text-align:center;font-size:11px;color:#555">56</div>
<div class="a" style="left:1409.7px;top:196px;width:12px;text-align:center;font-size:11px;color:#555">58</div>
<div class="a" style="left:1459.8px;top:196px;width:12px;text-align:center;font-size:11px;color:#555">62</div>
<div class="a" style="left:1484.8px;top:196px;width:12px;text-align:center;font-size:11px;color:#555">64</div>
<div class="a" style="left:1509.9px;top:196px;width:12px;text-align:center;font-size:11px;color:#555">66</div>
<div class="a" style="left:1534.9px;top:196px;width:12px;text-align:center;font-size:11px;color:#555">68</div>
<div class="a" style="left:1560.0px;top:196px;width:12px;text-align:center;font-size:11px;color:#555">70</div>
<div class="a" style="left:1585.0px;top:196px;width:12px;text-align:center;font-size:11px;color:#555">72</div>
<div class="a" style="left:661.3px;top:196px;width:6px;text-align:center;font-size:11px;color:#555">2</div>
<div class="a" style="left:636.2px;top:196px;width:6px;text-align:center;font-size:11px;color:#555">4</div>
<div class="a" style="left:611.2px;top:196px;width:6px;text-align:center;font-size:11px;color:#555">6</div>
<div class="a" style="left:676px;top:192px;width:10px;height:16px;background:#c8c8c8"></div>
<div class="a" style="left:678px;top:194px;width:6px;height:12px;background-image:linear-gradient(90deg,#666 50%,transparent 50%),linear-gradient(#666 50%,transparent 50%);background-size:2px 2px;opacity:.8"></div>
<div class="a" style="left:721px;top:192px;width:14px;height:16px;background:#c8c8c8"></div>
<div class="a" style="left:723px;top:194px;width:10px;height:12px;background-image:linear-gradient(90deg,#666 50%,transparent 50%),linear-gradient(#666 50%,transparent 50%);background-size:2px 2px;opacity:.8"></div>
<div class="a" style="left:1042px;top:192px;width:15px;height:16px;background:#c8c8c8"></div>
<div class="a" style="left:1044px;top:194px;width:11px;height:12px;background-image:linear-gradient(90deg,#666 50%,transparent 50%),linear-gradient(#666 50%,transparent 50%);background-size:2px 2px;opacity:.8"></div>
<div class="a" style="left:1431px;top:192px;width:13px;height:16px;background:#c8c8c8"></div>
<div class="a" style="left:1433px;top:194px;width:9px;height:12px;background-image:linear-gradient(90deg,#666 50%,transparent 50%),linear-gradient(#666 50%,transparent 50%);background-size:2px 2px;opacity:.8"></div>
<div class="a" style="left:1517px;top:192px;width:14px;height:16px;background:#c8c8c8"></div>
<div class="a" style="left:1519px;top:194px;width:10px;height:12px;background-image:linear-gradient(90deg,#666 50%,transparent 50%),linear-gradient(#666 50%,transparent 50%);background-size:2px 2px;opacity:.8"></div>
<svg style="left:1438px;top:189px" width="13" height="28" viewBox="0 0 13 28"><path d="M0.5 0.5h11l-4.5 7v1l4.5 8h-11l4.5-8v-1z" fill="#fff" stroke="#888"/><rect x="0.5" y="19.5" width="11" height="7" fill="#fff" stroke="#888"/></svg>
<svg style="left:1512px;top:202px" width="13" height="8" viewBox="0 0 13 8"><path d="M0.5 7.5l6-7 6 7z" fill="#fff" stroke="#888"/></svg>
<div class="a" style="left:274px;top:333px;width:17px;height:86px;background:#c8c8c8;"></div>
<div class="a" style="left:274px;top:419px;width:17px;height:540px;background:#fff;"></div>
<div class="a" style="left:274px;top:959px;width:17px;height:57px;background:#c8c8c8;"></div>
<div class="a" style="left:274px;top:553px;width:17px;height:7px;background:#c8c8c8;"></div>
<div class="a" style="left:274px;top:685px;width:17px;height:7px;background:#c8c8c8;"></div>
<div class="a" style="left:274px;top:843px;width:17px;height:7px;background:#c8c8c8;"></div>
<div class="a" style="left:274px;top:952px;width:17px;height:7px;background:#c8c8c8;"></div>
<div class="a" style="left:282.5px;top:344.8px;font-size:10px;color:#555;transform:translate(-50%,-50%) rotate(-90deg)">4</div>
<div class="a" style="left:281px;top:354px;width:6px;height:1px;background:#666"></div>
<div class="a" style="left:281px;top:372px;width:6px;height:1px;background:#666"></div>
<div class="a" style="left:282.5px;top:382.0px;font-size:10px;color:#555;transform:translate(-50%,-50%) rotate(-90deg)">2</div>
<div class="a" style="left:281px;top:391px;width:6px;height:1px;background:#666"></div>
<div class="a" style="left:281px;top:409px;width:6px;height:1px;background:#666"></div>
<div class="a" style="left:281px;top:428px;width:6px;height:1px;background:#666"></div>
<div class="a" style="left:281px;top:447px;width:6px;height:1px;background:#666"></div>
<div class="a" style="left:282.5px;top:456.3px;font-size:10px;color:#555;transform:translate(-50%,-50%) rotate(-90deg)">2</div>
<div class="a" style="left:281px;top:465px;width:6px;height:1px;background:#666"></div>
<div class="a" style="left:281px;top:484px;width:6px;height:1px;background:#666"></div>
<div class="a" style="left:282.5px;top:493.5px;font-size:10px;color:#555;transform:translate(-50%,-50%) rotate(-90deg)">4</div>
<div class="a" style="left:281px;top:502px;width:6px;height:1px;background:#666"></div>
<div class="a" style="left:281px;top:521px;width:6px;height:1px;background:#666"></div>
<div class="a" style="left:282.5px;top:530.7px;font-size:10px;color:#555;transform:translate(-50%,-50%) rotate(-90deg)">6</div>
<div class="a" style="left:281px;top:539px;width:6px;height:1px;background:#666"></div>
<div class="a" style="left:281px;top:558px;width:6px;height:1px;background:#666"></div>
<div class="a" style="left:282.5px;top:567.9px;font-size:10px;color:#555;transform:translate(-50%,-50%) rotate(-90deg)">8</div>
<div class="a" style="left:281px;top:577px;width:6px;height:1px;background:#666"></div>
<div class="a" style="left:281px;top:595px;width:6px;height:1px;background:#666"></div>
<div class="a" style="left:282.5px;top:605.0px;font-size:10px;color:#555;transform:translate(-50%,-50%) rotate(-90deg)">10</div>
<div class="a" style="left:281px;top:614px;width:6px;height:1px;background:#666"></div>
<div class="a" style="left:281px;top:632px;width:6px;height:1px;background:#666"></div>
<div class="a" style="left:282.5px;top:642.2px;font-size:10px;color:#555;transform:translate(-50%,-50%) rotate(-90deg)">12</div>
<div class="a" style="left:281px;top:651px;width:6px;height:1px;background:#666"></div>
<div class="a" style="left:281px;top:670px;width:6px;height:1px;background:#666"></div>
<div class="a" style="left:282.5px;top:679.4px;font-size:10px;color:#555;transform:translate(-50%,-50%) rotate(-90deg)">14</div>
<div class="a" style="left:281px;top:688px;width:6px;height:1px;background:#666"></div>
<div class="a" style="left:281px;top:707px;width:6px;height:1px;background:#666"></div>
<div class="a" style="left:282.5px;top:716.6px;font-size:10px;color:#555;transform:translate(-50%,-50%) rotate(-90deg)">16</div>
<div class="a" style="left:281px;top:725px;width:6px;height:1px;background:#666"></div>
<div class="a" style="left:281px;top:744px;width:6px;height:1px;background:#666"></div>
<div class="a" style="left:282.5px;top:753.7px;font-size:10px;color:#555;transform:translate(-50%,-50%) rotate(-90deg)">18</div>
<div class="a" style="left:281px;top:763px;width:6px;height:1px;background:#666"></div>
<div class="a" style="left:281px;top:781px;width:6px;height:1px;background:#666"></div>
<div class="a" style="left:282.5px;top:790.9px;font-size:10px;color:#555;transform:translate(-50%,-50%) rotate(-90deg)">20</div>
<div class="a" style="left:281px;top:800px;width:6px;height:1px;background:#666"></div>
<div class="a" style="left:281px;top:818px;width:6px;height:1px;background:#666"></div>
<div class="a" style="left:282.5px;top:828.1px;font-size:10px;color:#555;transform:translate(-50%,-50%) rotate(-90deg)">22</div>
<div class="a" style="left:281px;top:837px;width:6px;height:1px;background:#666"></div>
<div class="a" style="left:281px;top:855px;width:6px;height:1px;background:#666"></div>
<div class="a" style="left:282.5px;top:865.3px;font-size:10px;color:#555;transform:translate(-50%,-50%) rotate(-90deg)">24</div>
<div class="a" style="left:281px;top:874px;width:6px;height:1px;background:#666"></div>
<div class="a" style="left:281px;top:893px;width:6px;height:1px;background:#666"></div>
<div class="a" style="left:282.5px;top:902.5px;font-size:10px;color:#555;transform:translate(-50%,-50%) rotate(-90deg)">26</div>
<div class="a" style="left:281px;top:911px;width:6px;height:1px;background:#666"></div>
<div class="a" style="left:281px;top:930px;width:6px;height:1px;background:#666"></div>
<div class="a" style="left:282.5px;top:939.6px;font-size:10px;color:#555;transform:translate(-50%,-50%) rotate(-90deg)">28</div>
<div class="a" style="left:281px;top:948px;width:6px;height:1px;background:#666"></div>
<div class="a" style="left:281px;top:967px;width:6px;height:1px;background:#666"></div>
<div class="a" style="left:282.5px;top:976.8px;font-size:10px;color:#555;transform:translate(-50%,-50%) rotate(-90deg)">30</div>
<div class="a" style="left:281px;top:986px;width:6px;height:1px;background:#666"></div>
<div class="a" style="left:281px;top:1004px;width:6px;height:1px;background:#666"></div>
<div class="a" style="left:282.5px;top:1014.0px;font-size:10px;color:#555;transform:translate(-50%,-50%) rotate(-90deg)">32</div>
<div class="a" style="left:601px;top:217px;width:1005px;height:104px;background:#fff;border:1px solid #c3c3c3;border-top:none"></div>
<div class="a" style="left:665px;top:236px;width:21px;height:1px;background:#909090"></div>
<div class="a" style="left:686px;top:236px;width:1px;height:21px;background:#909090"></div>
<div class="a" style="left:1522px;top:236px;width:21px;height:1px;background:#909090"></div>
<div class="a" style="left:1522px;top:236px;width:1px;height:21px;background:#909090"></div>
<div class="a" style="left:1101px;top:251px;font-size:10px;color:#777;font-family:Liberation Serif">9<span style="color:#a0a0a0">↵</span></div>
<div class="a" style="left:601px;top:334px;width:1005px;height:700px;background:#fff;border:1px solid #c3c3c3;border-bottom:none"></div>
<div class="a" style="left:665px;top:417px;width:21px;height:1px;background:#909090"></div>
<div class="a" style="left:686px;top:397px;width:1px;height:20px;background:#909090"></div>
<div class="a" style="left:1522px;top:417px;width:21px;height:1px;background:#909090"></div>
<div class="a" style="left:1522px;top:397px;width:1px;height:20px;background:#909090"></div>
<div class="a" style="left:686px;top:401px;width:836px;height:1px;background:#8a8a8a;"></div>
<div class="a" style="left:1001px;top:387px;font-size:12px;color:#8eaadb;font-weight:bold;letter-spacing:0.45px">盘锦信泰石油技术有限公司–投标文件<span style="color:#b0b0b0;font-weight:normal">↵</span></div>
<svg style="left:1038px;top:399px" width="38" height="3" viewBox="0 0 36 3"><path d="M0 1.5q1-1.5 2 0t2 0 2 0 2 0 2 0 2 0 2 0 2 0 2 0 2 0 2 0 2 0 2 0 2 0 2 0 2 0 2 0 2 0" fill="none" stroke="#3a68cc" stroke-width="0.9"/></svg>
<div class="a" style="left:677px;top:435px;width:6px;height:7px;background:#111;"></div>
<div class="a" style="left:687px;top:423px;font-size:21px;color:#111;font-family:Liberation Serif;font-weight:bold">四、&nbsp; 投标响应表及偏差表<span style="color:#a0a0a0;font-weight:normal;font-size:14px">↵</span></div>
<div class="a" style="left:677px;top:476px;width:6px;height:6px;background:#111;"></div>
<div class="a" style="left:687px;top:464px;font-size:19px;color:#111;font-family:Liberation Serif;font-weight:bold">1&nbsp;&nbsp; 响应表格式<span style="color:#a0a0a0;font-weight:normal;font-size:14px">↵</span></div>
<div id="table">
<div class="a" style="left:682px;top:498px;width:843px;height:1px;background:#000;"></div>
<div class="a" style="left:682px;top:554px;width:843px;height:1px;background:#000;"></div>
<div class="a" style="left:682px;top:686px;width:843px;height:1px;background:#000;"></div>
<div class="a" style="left:682px;top:845px;width:843px;height:1px;background:#000;"></div>
<div class="a" style="left:682px;top:957px;width:843px;height:1px;background:#000;"></div>
<div class="a" style="left:682px;top:498px;width:1px;height:460px;background:#000;"></div>
<div class="a" style="left:729px;top:498px;width:1px;height:460px;background:#000;"></div>
<div class="a" style="left:1051px;top:498px;width:1px;height:460px;background:#000;"></div>
<div class="a" style="left:1439px;top:498px;width:1px;height:460px;background:#000;"></div>
<div class="a" style="left:1524px;top:498px;width:1px;height:460px;background:#000;"></div>
<div class="a tx" style="left:695px;top:522px">序号<svg class="pm" width="9" height="8" viewBox="0 0 9 8"><path d="M8 0.5v4.5H1.5M3.5 2.5L1.2 5l2.3 2.5" fill="none" stroke="#a8a8a8" stroke-width="1"/></svg></div>
<div class="a tx" style="left:868px;top:522px">评价条款<svg class="pm" width="9" height="8" viewBox="0 0 9 8"><path d="M8 0.5v4.5H1.5M3.5 2.5L1.2 5l2.3 2.5" fill="none" stroke="#a8a8a8" stroke-width="1"/></svg></div>
<div class="a tx" style="left:1210px;top:522px">投标响应情况<svg class="pm" width="9" height="8" viewBox="0 0 9 8"><path d="M8 0.5v4.5H1.5M3.5 2.5L1.2 5l2.3 2.5" fill="none" stroke="#a8a8a8" stroke-width="1"/></svg></div>
<div class="a tx" style="left:1445px;top:510px">证明资料所在</div>
<div class="a tx" style="left:1452px;top:536px">文件及页码<svg class="pm" width="9" height="8" viewBox="0 0 9 8"><path d="M8 0.5v4.5H1.5M3.5 2.5L1.2 5l2.3 2.5" fill="none" stroke="#a8a8a8" stroke-width="1"/></svg></div>
<div class="a" style="left:1526px;top:504px;font-size:0;line-height:0"><svg class="pm" width="9" height="8" viewBox="0 0 9 8"><path d="M8 0.5v4.5H1.5M3.5 2.5L1.2 5l2.3 2.5" fill="none" stroke="#a8a8a8" stroke-width="1"/></svg></div>
<div class="a tx" style="left:705px;top:616px">1<svg class="pm" width="9" height="8" viewBox="0 0 9 8"><path d="M8 0.5v4.5H1.5M3.5 2.5L1.2 5l2.3 2.5" fill="none" stroke="#a8a8a8" stroke-width="1"/></svg></div>
<div class="a tx" style="left:737px;top:560px">资格条件（响应性评审）1:<svg class="pm" width="9" height="8" viewBox="0 0 9 8"><path d="M8 0.5v4.5H1.5M3.5 2.5L1.2 5l2.3 2.5" fill="none" stroke="#a8a8a8" stroke-width="1"/></svg></div>
<div class="a tx j" style="left:737px;top:584px;width:310px">1. 投标人应为中华人民共和国境内注册的法人、法人分支</div>
<div class="a tx j" style="left:737px;top:612px;width:310px">机构或其他组织，具有承担民事责任的能力。提供统一社</div>
<div class="a tx j" style="left:737px;top:640px;width:310px">会信用代码的营业执照扫描件或其他证明设立登记的许</div>
<div class="a tx" style="left:737px;top:667px">可文件。<svg class="pm" width="9" height="8" viewBox="0 0 9 8"><path d="M8 0.5v4.5H1.5M3.5 2.5L1.2 5l2.3 2.5" fill="none" stroke="#a8a8a8" stroke-width="1"/></svg></div>
<div class="a tx j" style="left:1059px;top:602px;width:375px">我公司承诺是中华人民共和国境内注册的法人，具有承担民事责任的</div>
<div class="a tx" style="left:1059px;top:628px">能力。提供统一社会信用代码的营业执照扫描件。<svg class="pm" width="9" height="8" viewBox="0 0 9 8"><path d="M8 0.5v4.5H1.5M3.5 2.5L1.2 5l2.3 2.5" fill="none" stroke="#a8a8a8" stroke-width="1"/></svg></div>
<div class="a" style="left:1482px;top:616px;font-size:0;line-height:0"><svg class="pm" width="9" height="8" viewBox="0 0 9 8"><path d="M8 0.5v4.5H1.5M3.5 2.5L1.2 5l2.3 2.5" fill="none" stroke="#a8a8a8" stroke-width="1"/></svg></div>
<div class="a" style="left:1526px;top:560px;font-size:0;line-height:0"><svg class="pm" width="9" height="8" viewBox="0 0 9 8"><path d="M8 0.5v4.5H1.5M3.5 2.5L1.2 5l2.3 2.5" fill="none" stroke="#a8a8a8" stroke-width="1"/></svg></div>
<div class="a tx" style="left:705px;top:761px">2<svg class="pm" width="9" height="8" viewBox="0 0 9 8"><path d="M8 0.5v4.5H1.5M3.5 2.5L1.2 5l2.3 2.5" fill="none" stroke="#a8a8a8" stroke-width="1"/></svg></div>
<div class="a tx" style="left:737px;top:692px">资格条件（响应性评审）2:<svg class="pm" width="9" height="8" viewBox="0 0 9 8"><path d="M8 0.5v4.5H1.5M3.5 2.5L1.2 5l2.3 2.5" fill="none" stroke="#a8a8a8" stroke-width="1"/></svg></div>
<div class="a tx j" style="left:737px;top:715px;width:310px">2. 投标人应为本包产品的制造商（投标人需提供工艺流</div>
<div class="a tx j" style="left:737px;top:742px;width:310px">程；生产设备、检测设备的台账、图片；营业执照、生产</div>
<div class="a tx j" style="left:737px;top:771px;width:310px">场地等其他相关证明文件。其中，生产场地和设备需提供</div>
<div class="a tx j" style="left:737px;top:798px;width:310px">详细地址（例如：**省**市**县（区）**乡（街道）**号）</div>
<div class="a tx" style="left:737px;top:826px;letter-spacing:0.1px">和经纬照片（自动生成：经度；纬度；地址；时间））。<svg class="pm" width="9" height="8" viewBox="0 0 9 8"><path d="M8 0.5v4.5H1.5M3.5 2.5L1.2 5l2.3 2.5" fill="none" stroke="#a8a8a8" stroke-width="1"/></svg></div>
<div class="a tx j" style="left:1059px;top:747px;width:375px">我公司承诺是本包产品的制造商，已提供工艺流程、生产设备台账及</div>
<div class="a tx" style="left:1059px;top:774px">图片、检测设备台账及图片、营业执照、生产场地相关证明文件。<svg class="pm" width="9" height="8" viewBox="0 0 9 8"><path d="M8 0.5v4.5H1.5M3.5 2.5L1.2 5l2.3 2.5" fill="none" stroke="#a8a8a8" stroke-width="1"/></svg></div>
<svg style="left:1396px;top:759px" width="38" height="3" viewBox="0 0 38 3"><path d="M0 1.5 q0.5 -1.5 1 0 t1 0 q0.5 -1.5 1 0 t1 0 q0.5 -1.5 1 0 t1 0 q0.5 -1.5 1 0 t1 0 q0.5 -1.5 1 0 t1 0 q0.5 -1.5 1 0 t1 0 q0.5 -1.5 1 0 t1 0 q0.5 -1.5 1 0 t1 0 q0.5 -1.5 1 0 t1 0 q0.5 -1.5 1 0 t1 0 q0.5 -1.5 1 0 t1 0 q0.5 -1.5 1 0 t1 0 q0.5 -1.5 1 0 t1 0 q0.5 -1.5 1 0 t1 0 q0.5 -1.5 1 0 t1 0 q0.5 -1.5 1 0 t1 0 q0.5 -1.5 1 0 t1 0 q0.5 -1.5 1 0 t1 0 q0.5 -1.5 1 0 t1 0" fill="none" stroke="#3a68cc" stroke-width="0.9"/></svg>
<svg style="left:1060px;top:786px" width="26" height="3" viewBox="0 0 26 3"><path d="M0 1.5 q0.5 -1.5 1 0 t1 0 q0.5 -1.5 1 0 t1 0 q0.5 -1.5 1 0 t1 0 q0.5 -1.5 1 0 t1 0 q0.5 -1.5 1 0 t1 0 q0.5 -1.5 1 0 t1 0 q0.5 -1.5 1 0 t1 0 q0.5 -1.5 1 0 t1 0 q0.5 -1.5 1 0 t1 0 q0.5 -1.5 1 0 t1 0 q0.5 -1.5 1 0 t1 0 q0.5 -1.5 1 0 t1 0 q0.5 -1.5 1 0 t1 0" fill="none" stroke="#3a68cc" stroke-width="0.9"/></svg>
<svg style="left:1147px;top:786px" width="64" height="3" viewBox="0 0 64 3"><path d="M0 1.5 q0.5 -1.5 1 0 t1 0 q0.5 -1.5 1 0 t1 0 q0.5 -1.5 1 0 t1 0 q0.5 -1.5 1 0 t1 0 q0.5 -1.5 1 0 t1 0 q0.5 -1.5 1 0 t1 0 q0.5 -1.5 1 0 t1 0 q0.5 -1.5 1 0 t1 0 q0.5 -1.5 1 0 t1 0 q0.5 -1.5 1 0 t1 0 q0.5 -1.5 1 0 t1 0 q0.5 -1.5 1 0 t1 0 q0.5 -1.5 1 0 t1 0 q0.5 -1.5 1 0 t1 0 q0.5 -1.5 1 0 t1 0 q0.5 -1.5 1 0 t1 0 q0.5 -1.5 1 0 t1 0 q0.5 -1.5 1 0 t1 0 q0.5 -1.5 1 0 t1 0 q0.5 -1.5 1 0 t1 0 q0.5 -1.5 1 0 t1 0 q0.5 -1.5 1 0 t1 0 q0.5 -1.5 1 0 t1 0 q0.5 -1.5 1 0 t1 0 q0.5 -1.5 1 0 t1 0 q0.5 -1.5 1 0 t1 0 q0.5 -1.5 1 0 t1 0 q0.5 -1.5 1 0 t1 0 q0.5 -1.5 1 0 t1 0 q0.5 -1.5 1 0 t1 0 q0.5 -1.5 1 0 t1 0 q0.5 -1.5 1 0 t1 0" fill="none" stroke="#3a68cc" stroke-width="0.9"/></svg>
<div class="a" style="left:1482px;top:762px;font-size:0;line-height:0"><svg class="pm" width="9" height="8" viewBox="0 0 9 8"><path d="M8 0.5v4.5H1.5M3.5 2.5L1.2 5l2.3 2.5" fill="none" stroke="#a8a8a8" stroke-width="1"/></svg></div>
<div class="a" style="left:1526px;top:691px;font-size:0;line-height:0"><svg class="pm" width="9" height="8" viewBox="0 0 9 8"><path d="M8 0.5v4.5H1.5M3.5 2.5L1.2 5l2.3 2.5" fill="none" stroke="#a8a8a8" stroke-width="1"/></svg></div>
<div class="a tx" style="left:705px;top:897px">3<svg class="pm" width="9" height="8" viewBox="0 0 9 8"><path d="M8 0.5v4.5H1.5M3.5 2.5L1.2 5l2.3 2.5" fill="none" stroke="#a8a8a8" stroke-width="1"/></svg></div>
<div class="a tx" style="left:737px;top:855px">资格条件（响应性评审）3:<svg class="pm" width="9" height="8" viewBox="0 0 9 8"><path d="M8 0.5v4.5H1.5M3.5 2.5L1.2 5l2.3 2.5" fill="none" stroke="#a8a8a8" stroke-width="1"/></svg></div>
<div class="a tx j" style="left:737px;top:878px;width:310px">3. 投标人具有良好的银行资信和企业信誉，且没有处于被</div>
<div class="a tx j" style="left:737px;top:907px;width:310px">责令停业、财产被接管、冻结、破产或其他关、停、并、</div>
<div class="a tx j" style="left:737px;top:934px;width:310px">转状态（提供会计师事务所出具标准的 2024 年度无保留</div>
<div class="a tx j" style="left:1059px;top:855px;width:375px">我公司承诺具有良好的银行资信和企业信誉，没有处于被责令停业、</div>
<div class="a tx j" style="left:1059px;top:883px;width:375px">财产被接管、冻结、破产或其他关、停、并、转状态，已提供 2024 年</div>
<div class="a tx j" style="left:1059px;top:911px;width:375px">度审计报告，在最近三年没有与骗取合同有关以及其他经济方面的违</div>
<div class="a tx" style="left:1059px;top:938px">法行为。<svg class="pm" width="9" height="8" viewBox="0 0 9 8"><path d="M8 0.5v4.5H1.5M3.5 2.5L1.2 5l2.3 2.5" fill="none" stroke="#a8a8a8" stroke-width="1"/></svg></div>
<div class="a" style="left:1482px;top:898px;font-size:0;line-height:0"><svg class="pm" width="9" height="8" viewBox="0 0 9 8"><path d="M8 0.5v4.5H1.5M3.5 2.5L1.2 5l2.3 2.5" fill="none" stroke="#a8a8a8" stroke-width="1"/></svg></div>
<div class="a" style="left:1526px;top:851px;font-size:0;line-height:0"><svg class="pm" width="9" height="8" viewBox="0 0 9 8"><path d="M8 0.5v4.5H1.5M3.5 2.5L1.2 5l2.3 2.5" fill="none" stroke="#a8a8a8" stroke-width="1"/></svg></div>
<div class="a" style="left:665px;top:960px;width:21px;height:1px;background:#909090"></div>
<div class="a" style="left:686px;top:960px;width:1px;height:21px;background:#909090"></div>
<div class="a" style="left:1522px;top:960px;width:21px;height:1px;background:#909090"></div>
<div class="a" style="left:1522px;top:960px;width:1px;height:21px;background:#909090"></div>
<div class="a" style="left:1099px;top:975px;font-size:10px;letter-spacing:-0.5px;color:#777;font-family:Liberation Serif">10<svg class="pm" width="9" height="8" viewBox="0 0 9 8"><path d="M8 0.5v4.5H1.5M3.5 2.5L1.2 5l2.3 2.5" fill="none" stroke="#a8a8a8" stroke-width="1"/></svg></div>
</div>
</div>

<!-- status bar -->
<div class="a" style="left:6px;top:1016px;width:1918px;height:22px;background:#f3f3f3;border-top:1px solid #d6d6d6"></div>
<div id="status">
<svg style="left:1px;top:1022px" width="3" height="12" viewBox="0 0 3 12"><circle cx="1.5" cy="1.5" r="1" fill="#999"/><circle cx="1.5" cy="5.5" r="1" fill="#999"/><circle cx="1.5" cy="9.5" r="1" fill="#999"/></svg>
<div class="a" style="left:18px;top:1022px;font-size:12px;color:#333;letter-spacing:0.35px">第 10 页，共 196 页</div>
<div class="a" style="left:148px;top:1022px;font-size:12px;color:#333;letter-spacing:0.3px">18888 个字</div>
<svg style="left:229px;top:1020px" width="15" height="13" viewBox="0 0 15 13"><path d="M0.5 1.5h5.5l1.5 1.5v9.5L6 11H0.5z" fill="none" stroke="#555"/><path d="M7.5 3v9.5" stroke="#555"/><path d="M9 3l5 5M14 3l-5 5" stroke="#555" stroke-width="1"/></svg>
<div class="a" style="left:262px;top:1022px;font-size:12px;color:#333;">简体中文(中国大陆)</div>
<div class="a" style="left:384px;top:1022px;font-size:12px;color:#333;">修订: 关闭</div>
<svg style="left:457px;top:1020px" width="17" height="14" viewBox="0 0 17 14"><circle cx="6.5" cy="6.5" r="5.5" fill="none" stroke="#444" stroke-width="1.2" stroke-dasharray="3 1.5"/><path d="M9 8l5.5 5.5M14.5 8L9 13.5" stroke="#333" stroke-width="1.5"/></svg>
<div class="a" style="left:476px;top:1022px;font-size:12px;color:#333;font-weight:bold">辅助功能: 调查</div>
<svg style="left:1634px;top:1020px" width="15" height="13" viewBox="0 0 15 13"><path d="M0.5 1.5c2.5-1 4.5-1 7 0.5 2.5-1.5 4.5-1.5 7-0.5v10.5c-2.5-1-4.5-1-7 0.5-2.5-1.5-4.5-1.5-7-0.5z" fill="none" stroke="#555"/><path d="M7.5 2v10.5M2 4h4M2 6.5h4M2 9h4M9 4h4M9 6.5h4M9 9h4" stroke="#555" stroke-width="0.8"/></svg>
<div class="a" style="left:1661px;top:1017px;width:40px;height:21px;background:#c8c8c8"></div>
<svg style="left:1674px;top:1020px" width="15" height="14" viewBox="0 0 15 14"><rect x="0.5" y="0.5" width="14" height="13" fill="none" stroke="#444"/><path d="M3 3.5h9M3 6h9M3 8.5h9M3 11h9" stroke="#444" stroke-width="0.9"/></svg>
<svg style="left:1714px;top:1019px" width="15" height="15" viewBox="0 0 15 15"><rect x="0.5" y="0.5" width="11" height="11" fill="none" stroke="#555"/><path d="M2.5 3h7M2.5 5.5h4M2.5 8h3" stroke="#555" stroke-width="0.9"/><circle cx="10.5" cy="10.5" r="3.8" fill="#f3f3f3" stroke="#555"/><path d="M8.5 10.5h4M10.5 8.5v4" stroke="#555" stroke-width="0.8"/></svg>
<div class="a" style="left:1747px;top:1026px;width:8px;height:1px;background:#444"></div>
<div class="a" style="left:1760px;top:1027px;width:100px;height:1px;background:#555"></div>
<div class="a" style="left:1803px;top:1021px;width:5px;height:13px;background:#444"></div>
<div class="a" style="left:1810px;top:1024px;width:1px;height:8px;background:#555"></div>
<svg style="left:1864px;top:1022px" width="9" height="9" viewBox="0 0 9 9"><path d="M0 4.5h9M4.5 0v9" stroke="#444" stroke-width="1.1"/></svg>
<div class="a" style="left:1886px;top:1022px;font-size:12px;color:#333;">90%</div>
</div>
<!-- taskbar strip -->
<div class="a" style="left:0;top:1038px;width:1924px;height:6px;background:#1f2d38"></div>
<div class="a" style="left:251px;top:1038px;width:48px;height:6px;background:#b4692a"></div>
</body></html>
